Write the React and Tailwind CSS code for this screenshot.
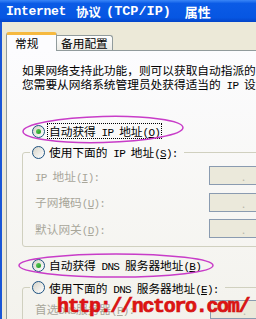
import React from "react";

function L({ children }) {
  return (
    <span className="[font-family:'Liberation_Mono',monospace] text-[11px] leading-[0px] tracking-[-0.75px]">
      {children}
    </span>
  );
}

function Radio({ checked }) {
  return (
    <span className="flex h-[13px] w-[13px] shrink-0 items-center justify-center rounded-full border border-[#1c5180] bg-linear-to-br from-[#d6d3c8] to-white">
      {checked && (
        <span className="h-[5px] w-[5px] rounded-full bg-linear-to-br from-[#5fd35f] to-[#1a951a]" />
      )}
    </span>
  );
}

function IpBox() {
  return (
    <div className="flex h-[19px] w-[150px] shrink-0 items-end border border-[#8a9bb0] bg-[#ebe9db] pb-[2px] pl-[32px] text-[11px] leading-[11px] text-[#b8b6aa]">
      <span>.</span>
      <span className="pl-[28px]">.</span>
      <span className="pl-[28px]">.</span>
    </div>
  );
}

function Row({ children }) {
  return (
    <div className="ml-[5px] flex h-[19px] items-center">
      <div className="w-[174px] shrink-0 whitespace-nowrap text-[#a8a69a]">{children}</div>
      <IpBox />
    </div>
  );
}

export default function App() {
  return (
    <div className="relative h-[319px] w-[256px] overflow-hidden bg-[#ece9d8] text-[11.7px] leading-[14px] text-black [font-family:'Noto_Sans_CJK_SC',sans-serif]">
      <div className="flex h-full w-[420px] flex-col">
        {/* Title bar */}
        <div className="flex h-[22px] shrink-0 items-center bg-[linear-gradient(to_bottom,#3a86f7_0%,#0b5be6_16%,#0656e2_80%,#0344c8_100%)] pl-[6px] pt-[1px] font-bold whitespace-nowrap text-white">
          <span className="text-[13px] tracking-[-0.3px] [font-family:'Liberation_Mono',monospace]">Internet</span>
          <span className="ml-[10px] text-[12.5px]">协议</span>
          <span className="ml-[5px] text-[13.5px] [font-family:'Liberation_Mono',monospace]">(TCP/IP)</span>
          <span className="ml-[14px] text-[13px]">属性</span>
        </div>

        <div className="flex flex-1">
          <div className="w-[2px] shrink-0 bg-[#1a56d6]" />
          <div className="flex flex-1 flex-col">
            {/* Tabs */}
            <div className="flex items-end pl-[4px] pt-[10px]">
              <div className="relative z-10 -mb-px flex h-[19px] w-[51px] items-center rounded-t-[3px] border-x border-t-[3px] border-x-[#919b9c] border-t-[#f6b93f] bg-[#fcfcfe] pl-[8px]">
                常规
              </div>
              <div className="flex h-[15px] w-[56px] items-center rounded-tr-[3px] border-r border-t border-[#919b9c] bg-linear-to-b from-[#fefefe] to-[#ecebe5] pl-[4px]">
                备用配置
              </div>
            </div>

            {/* Panel */}
            <div className="ml-[4px] flex flex-1 flex-col border-l border-t border-[#919b9c] bg-linear-to-b from-[#fcfcfe] to-[#f3f2ec]">
              <div className="whitespace-nowrap pl-[15px] pt-[12px] leading-[13.5px]">
                <div className="h-[13.5px]">如果网络支持此功能，则可以获取自动指派的<L> IP </L>设置。否则，</div>
                <div className="h-[13.5px]">您需要从网络系统管理员处获得适当的<L> IP </L>设置。</div>
              </div>

              <div className="ml-[25px] mt-[33px] flex h-[16px] items-center gap-[2px] whitespace-nowrap">
                <Radio checked />
                <span className="flex h-[16px] items-center border border-dotted border-black px-[1px]">
                  <span>自动获得<L> IP </L>地址<L>(<u>O</u>)</L></span>
                </span>
              </div>

              <fieldset className="ml-[15px] mt-[5px] rounded-[3px] border border-[#d0d0bf] pb-[8px] pl-[7px]">
                <legend>
                  <div className="flex h-[16px] items-center gap-[2px] whitespace-nowrap pl-[2px] pr-[4px]">
                    <Radio />
                    <span className="flex h-[16px] items-center border border-transparent px-[1px]">
                      <span>使用下面的<L> IP </L>地址<L>(<u>S</u>):</L></span>
                    </span>
                  </div>
                </legend>
                <div className="mt-[6px] flex flex-col gap-[7.5px]">
                  <Row>
                    <L>IP </L>地址<L>(<u>I</u>):</L>
                  </Row>
                  <Row>
                    子网掩码<L>(<u>U</u>):</L>
                  </Row>
                  <Row>
                    默认网关<L>(<u>D</u>):</L>
                  </Row>
                </div>
              </fieldset>

              <div className="ml-[25px] mt-[10px] flex h-[16px] items-center gap-[2px] whitespace-nowrap">
                <Radio checked />
                <span className="flex h-[16px] items-center border border-transparent px-[1px]">
                  <span>自动获得<L> DNS </L>服务器地址<L>(<u>B</u>)</L></span>
                </span>
              </div>

              <fieldset className="ml-[15px] mt-[6.5px] rounded-[3px] border border-[#d0d0bf] pb-[8px] pl-[7px]">
                <legend>
                  <div className="flex h-[16px] items-center gap-[2px] whitespace-nowrap pl-[2px] pr-[4px]">
                    <Radio />
                    <span className="flex h-[16px] items-center border border-transparent px-[1px]">
                      <span>使用下面的<L> DNS </L>服务器地址<L>(<u>E</u>):</L></span>
                    </span>
                  </div>
                </legend>
                <div className="mt-[4px] flex flex-col gap-[7.5px]">
                  <div className="ml-[5px] flex h-[19px] items-center">
                    <div className="w-[175px] shrink-0 whitespace-nowrap text-[#a8a69a]">
                      首选<L>DNS</L>服务器<L>(<u>P</u>):</L>
                    </div>
                    <IpBox />
                  </div>
                </div>
              </fieldset>
            </div>
          </div>
        </div>
      </div>

      {/* Annotation ellipses */}
      <svg className="pointer-events-none absolute inset-0" width="256" height="319" viewBox="0 0 256 319">
        <ellipse cx="103" cy="129.5" rx="80" ry="13" fill="none" stroke="#c83cc8" strokeWidth="1.5" transform="rotate(-1.4 103 129.5)" />
        <ellipse cx="116" cy="265.5" rx="97" ry="11.5" fill="none" stroke="#c83cc8" strokeWidth="1.5" />
      </svg>

      {/* Watermark */}
      <div className="pointer-events-none absolute left-[57px] top-[297px] whitespace-nowrap text-[20px] font-bold leading-[20px] tracking-[-1.33px] text-[#e11414] [font-family:'Liberation_Mono',monospace] [-webkit-text-stroke:0.7px_#d01010]">
        http://nctoro.com/
      </div>
    </div>
  );
}
